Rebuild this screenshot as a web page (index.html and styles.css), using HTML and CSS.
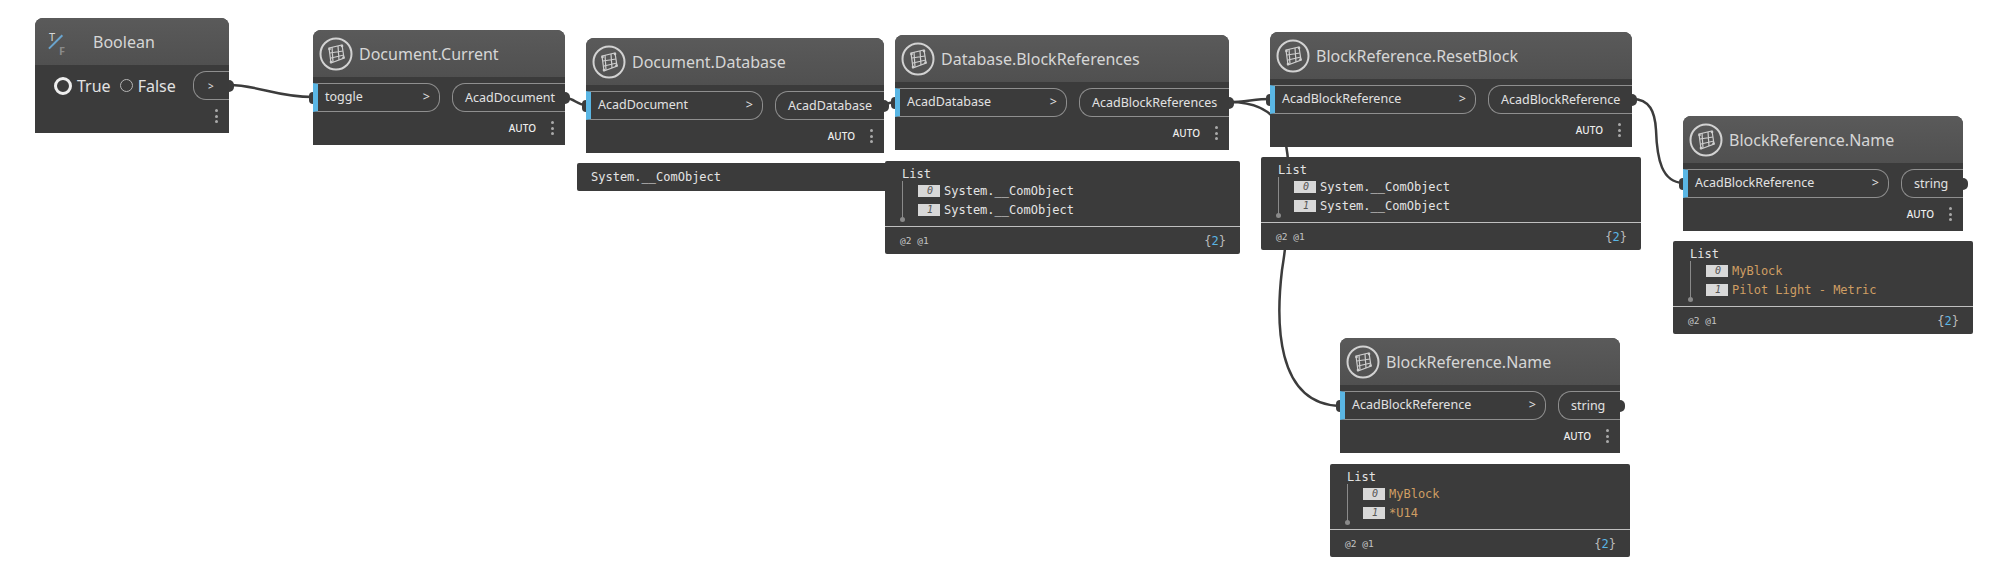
FILE: index.html
```html
<!DOCTYPE html>
<html lang="en">
<head>
	<meta charset="UTF-8">
	<title>Dynamo graph</title>
	<link rel="stylesheet" href="styles.css">
</head>
<body>
	<svg width="0" height="0" class="defs">
		<symbol id="zt" viewBox="0 0 34 34">
			<circle cx="17" cy="17" r="15.5" fill="none" stroke="#d2d2d2" stroke-width="2"/>
			<g fill="none" stroke="#cfcfcf" stroke-width="1.2">
				<path d="M10 11 L23 8 L25 21 L12 26 Z"/>
				<path d="M13 10 L14 25 M19 9 L20 23 M11 16 L24 14 M12 21 L25 18"/>
			</g>
			<g fill="#cfcfcf">
				<circle cx="10.5" cy="12" r="1.3"/>
				<circle cx="23" cy="9" r="1.3"/>
				<circle cx="12" cy="25" r="1.3"/>
				<circle cx="24.5" cy="20.5" r="1.3"/>
			</g>
		</symbol>
	</svg>

	<div id="graph">
		<svg class="wires" width="1998" height="568">
			<path d="M229 85 C258 85 276 97 313 97"/>
			<path d="M565 98 C575 98 576 105 586 105"/>
			<path d="M884 104 C888 104 891 102 895 102"/>
			<path d="M1229 102 C1245 102 1255 99 1270 99"/>
			<path d="M1229 102 C1252 102 1272 108 1282 130 C1293 160 1290 220 1282 270 C1276 320 1275 404 1340 406"/>
			<path d="M1632 99 C1650 99 1655 112 1656 130 C1657 160 1662 182 1683 183"/>
		</svg>

		<div class="node n-bool">
			<div class="node-head">
				<span class="tf"><i class="tf-t">T</i><i class="tf-line"></i><i class="tf-f">F</i></span>
				<span class="node-title">Boolean</span>
			</div>
			<div class="ports ports-bool">
				<label class="radio radio-on">True</label>
				<label class="radio">False</label>
				<div class="port-out port-small">&gt;</div>
			</div>
			<div class="node-foot"><span class="dots"><b></b><b></b><b></b></span></div>
		</div>

		<div class="node n-current">
			<div class="node-head">
				<svg class="zt"><use href="#zt"/></svg>
				<span class="node-title">Document.Current</span>
			</div>
			<div class="ports">
				<div class="port-in w-127"><span>toggle</span><span>&gt;</span></div>
				<div class="port-out">AcadDocument</div>
			</div>
			<div class="node-foot"><span class="auto">AUTO</span><span class="dots"><b></b><b></b><b></b></span></div>
		</div>

		<div class="node n-database">
			<div class="node-head">
				<svg class="zt"><use href="#zt"/></svg>
				<span class="node-title">Document.Database</span>
			</div>
			<div class="ports">
				<div class="port-in w-177"><span>AcadDocument</span><span>&gt;</span></div>
				<div class="port-out">AcadDatabase</div>
			</div>
			<div class="node-foot"><span class="auto">AUTO</span><span class="dots"><b></b><b></b><b></b></span></div>
		</div>

		<div class="preview p-database">
			<div class="single">System.__ComObject</div>
		</div>

		<div class="node n-blockrefs">
			<div class="node-head">
				<svg class="zt"><use href="#zt"/></svg>
				<span class="node-title">Database.BlockReferences</span>
			</div>
			<div class="ports">
				<div class="port-in w-172"><span>AcadDatabase</span><span>&gt;</span></div>
				<div class="port-out">AcadBlockReferences</div>
			</div>
			<div class="node-foot"><span class="auto">AUTO</span><span class="dots"><b></b><b></b><b></b></span></div>
		</div>

		<div class="preview p-blockrefs">
			<div class="list-title">List</div>
			<div class="tree">
				<div class="row"><span class="idx">0</span><span>System.__ComObject</span></div>
				<div class="row"><span class="idx">1</span><span>System.__ComObject</span></div>
			</div>
			<div class="preview-foot"><span>@2 @1</span><span class="count">{<em>2</em>}</span></div>
		</div>

		<div class="node n-reset">
			<div class="node-head">
				<svg class="zt"><use href="#zt"/></svg>
				<span class="node-title">BlockReference.ResetBlock</span>
			</div>
			<div class="ports">
				<div class="port-in w-206"><span>AcadBlockReference</span><span>&gt;</span></div>
				<div class="port-out">AcadBlockReference</div>
			</div>
			<div class="node-foot"><span class="auto">AUTO</span><span class="dots"><b></b><b></b><b></b></span></div>
		</div>

		<div class="preview p-reset">
			<div class="list-title">List</div>
			<div class="tree">
				<div class="row"><span class="idx">0</span><span>System.__ComObject</span></div>
				<div class="row"><span class="idx">1</span><span>System.__ComObject</span></div>
			</div>
			<div class="preview-foot"><span>@2 @1</span><span class="count">{<em>2</em>}</span></div>
		</div>

		<div class="node n-name1">
			<div class="node-head">
				<svg class="zt"><use href="#zt"/></svg>
				<span class="node-title">BlockReference.Name</span>
			</div>
			<div class="ports">
				<div class="port-in w-206"><span>AcadBlockReference</span><span>&gt;</span></div>
				<div class="port-out">string</div>
			</div>
			<div class="node-foot"><span class="auto">AUTO</span><span class="dots"><b></b><b></b><b></b></span></div>
		</div>

		<div class="preview p-name1">
			<div class="list-title">List</div>
			<div class="tree">
				<div class="row str"><span class="idx">0</span><span>MyBlock</span></div>
				<div class="row str"><span class="idx">1</span><span>Pilot Light - Metric</span></div>
			</div>
			<div class="preview-foot"><span>@2 @1</span><span class="count">{<em>2</em>}</span></div>
		</div>

		<div class="node n-name2">
			<div class="node-head">
				<svg class="zt"><use href="#zt"/></svg>
				<span class="node-title">BlockReference.Name</span>
			</div>
			<div class="ports">
				<div class="port-in w-206"><span>AcadBlockReference</span><span>&gt;</span></div>
				<div class="port-out">string</div>
			</div>
			<div class="node-foot"><span class="auto">AUTO</span><span class="dots"><b></b><b></b><b></b></span></div>
		</div>

		<div class="preview p-name2">
			<div class="list-title">List</div>
			<div class="tree">
				<div class="row str"><span class="idx">0</span><span>MyBlock</span></div>
				<div class="row str"><span class="idx">1</span><span>*U14</span></div>
			</div>
			<div class="preview-foot"><span>@2 @1</span><span class="count">{<em>2</em>}</span></div>
		</div>
	</div>
</body>
</html>
```

FILE: styles.css
```css
*{ margin: 0; padding: 0; box-sizing: border-box; }
html,body{ background: #fff; overflow: hidden; }
.defs{ position: absolute; }

#graph{ position: relative; width: 1998px; height: 568px; font-family: "Noto Sans", sans-serif; }
.wires{ position: absolute; left: 0; top: 0; }
.wires path{ fill: none; stroke: #3c3c3c; stroke-width: 2.5; }

/* nodes sit on a free canvas */
.node{ position: absolute; height: 115px; background: #3b3b3b; border-radius: 8px 8px 0 0; color: #e2e2e2; display: flex; flex-direction: column; }
.n-bool{ left: 35px; top: 18px; width: 194px; }
.n-current{ left: 313px; top: 30px; width: 252px; }
.n-database{ left: 586px; top: 38px; width: 298px; }
.n-blockrefs{ left: 895px; top: 35px; width: 334px; }
.n-reset{ left: 1270px; top: 32px; width: 362px; }
.n-name1{ left: 1683px; top: 116px; width: 280px; }
.n-name2{ left: 1340px; top: 338px; width: 280px; }

.node-head{ height: 47px; padding-left: 6px; background: linear-gradient(#5a5a5a, #505050); border-radius: 8px 8px 0 0; display: flex; align-items: center; gap: 6px; }
.node-title{ font-size: 16px; color: #d6d6d6; white-space: nowrap; }
.zt{ width: 34px; height: 34px; flex: none; }

.tf{ position: relative; width: 42px; height: 30px; margin-left: 4px; flex: none; }
.tf i{ position: absolute; font-style: normal; font-size: 11px; line-height: 11px; }
.tf-t{ left: 4px; top: 4px; color: #d6d6d6; }
.tf-f{ left: 14px; top: 18px; color: #8a8a8a; font-weight: 700; }
.tf-line{ left: 1px; top: 14px; width: 19px; height: 1.5px; background: #6aa5cf; transform: rotate(-45deg); }

.ports{ margin-top: 6px; display: flex; justify-content: space-between; font-size: 12.5px; }
.port-in, .port-out{ height: 29px; border: 1px solid #8f8f8f; display: flex; align-items: center; position: relative; white-space: nowrap; }
.port-in{ justify-content: space-between; padding: 0 9px 2px 7px; border-left: 5px solid #5ab6e4; border-radius: 0 13px 13px 0; }
.port-out{ flex: 1; margin-left: 12px; padding-left: 12px; border-right: 0; border-radius: 13px 0 0 13px; overflow: visible; }
.port-small{ flex: none; width: 36px; font-size: 10px; padding-left: 14px; margin-left: auto; }
.w-127{ width: 127px; }
.w-172{ width: 172px; }
.w-177{ width: 177px; }
.w-206{ width: 206px; }

/* connector nubs */
.port-in::before{ content: ""; position: absolute; left: -9px; top: 8px; width: 4px; height: 12px; background: #3c3c3c; border-radius: 4px 0 0 4px; }
.port-out::after{ content: ""; position: absolute; right: -5px; top: 8px; width: 5px; height: 12px; background: #3c3c3c; border-radius: 0 6px 6px 0; }

.ports-bool{ align-items: center; font-size: 16px; }
.radio{ display: flex; align-items: center; gap: 5px; color: #e2e2e2; }
.radio::before{ content: ""; width: 11px; height: 11px; border: 1px solid #b5b5b5; border-radius: 50%; }
.radio-on{ margin-left: 19px; }
.radio-on::before{ width: 12px; height: 12px; border: 3.5px solid #eee; background: #3b3b3b; }
.radio + .radio{ margin-left: 9px; }

.node-foot{ flex: 1; display: flex; justify-content: flex-end; align-items: center; gap: 15px; padding: 0 11px 1px 0; }
.auto{ font-size: 10px; font-weight: 500; color: #eee; }
.dots{ display: flex; flex-direction: column; gap: 2.5px; }
.dots b{ display: block; width: 3px; height: 3px; border-radius: 50%; background: #aaa; }

/* previews under the nodes */
.preview{ position: absolute; background: #3b3b3b; border-radius: 2px; color: #e4e4e4; font-family: "DejaVu Sans Mono", monospace; font-size: 12px; height: 93px; padding-top: 7px; }
.p-database{ left: 577px; top: 163px; width: 320px; height: 28px; padding: 0; }
.p-blockrefs{ left: 885px; top: 161px; width: 355px; }
.p-reset{ left: 1261px; top: 157px; width: 380px; }
.p-name1{ left: 1673px; top: 241px; width: 300px; }
.p-name2{ left: 1330px; top: 464px; width: 300px; }

.single{ line-height: 28px; padding-left: 14px; }
.list-title{ line-height: 13px; padding-left: 17px; }
.tree{ margin-left: 17px; height: 38px; padding-left: 15px; border-left: 1px solid #8a8a8a; position: relative; }
.tree::after{ content: ""; position: absolute; left: -3px; bottom: -3px; width: 5px; height: 5px; border-radius: 50%; background: #8a8a8a; }
.row{ height: 19px; display: flex; align-items: center; gap: 4px; }
.str{ color: #cf9e63; }
.idx{ width: 22px; height: 12px; background: #d8d8d8; color: #555; font-size: 10px; line-height: 12px; font-style: italic; text-align: right; padding-right: 7px; }
.preview-foot{ margin-top: 7px; height: 28px; border-top: 1px solid #c0c0c0; display: flex; justify-content: space-between; align-items: center; padding: 0 14px 0 15px; font-size: 9.5px; color: #c4c4c4; }
.count{ font-size: 12px; color: #bbb; }
.count em{ font-style: normal; color: #5ab6e4; }
```
